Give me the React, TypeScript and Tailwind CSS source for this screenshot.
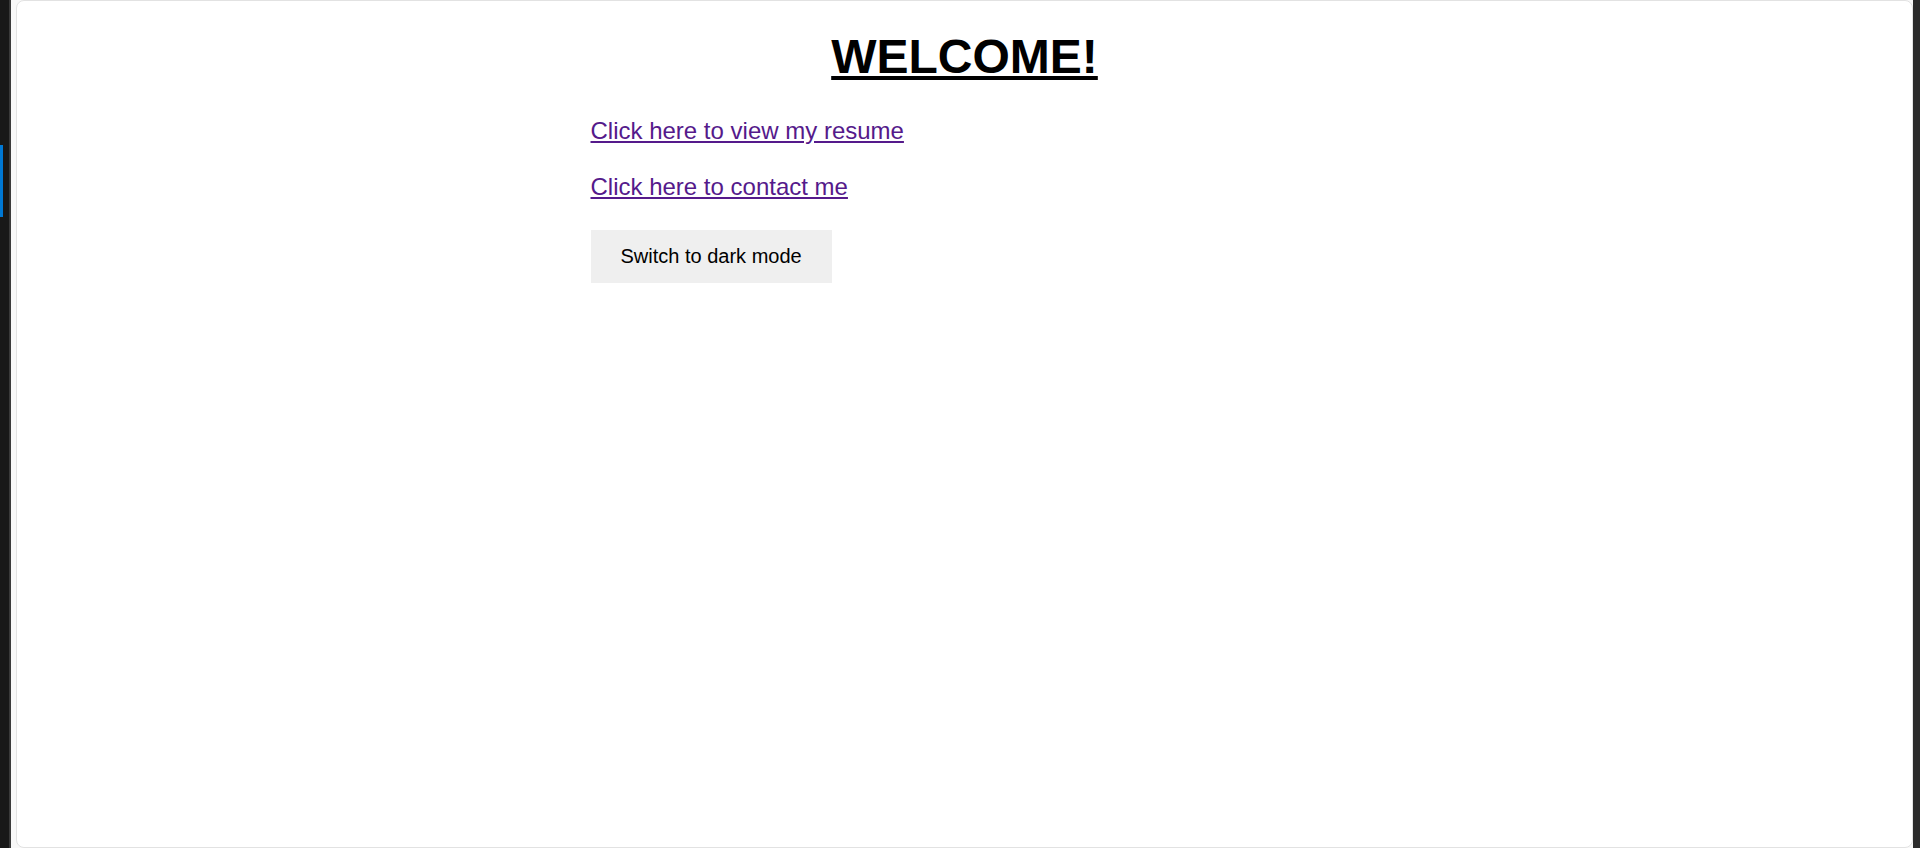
import React from "react";

export default function App() {
  return (
    <div
      className="flex h-[848px] w-full overflow-hidden bg-[#181818]"
      style={{ fontFamily: '"Liberation Sans", Arial, sans-serif' }}
    >
      <div className="w-[9px] shrink-0 bg-[#181818] pt-[145px]">
        <div className="h-[72px] w-[3px] bg-[#0078d4]" />
      </div>
      <div className="w-[2px] shrink-0 bg-[#3a3a3a]" />
      <div className="flex-1 bg-[#f8f8f8] pl-[5px]">
        <div className="h-full rounded-[8px] border border-[#e2e2e2] bg-white">
          <div className="mx-auto w-[748px] pt-[28px]">
            <h1 className="text-center text-[48px] font-bold leading-[56px] text-black underline">
              WELCOME!
            </h1>
            <div className="mt-[32px] text-[24px] leading-[28px]">
              <a href="#" className="text-[#551a8b] underline">
                Click here to view my resume
              </a>
            </div>
            <div className="mt-[28px] text-[24px] leading-[28px]">
              <a href="#" className="text-[#551a8b] underline">
                Click here to contact me
              </a>
            </div>
            <button className="mt-[29px] bg-[#efefef] px-[30px] py-[15px] text-[20px] leading-[23px] text-black">
              Switch to dark mode
            </button>
          </div>
        </div>
      </div>
      <div className="w-[7px] shrink-0 bg-[#2b2b2b]" />
    </div>
  );
}
